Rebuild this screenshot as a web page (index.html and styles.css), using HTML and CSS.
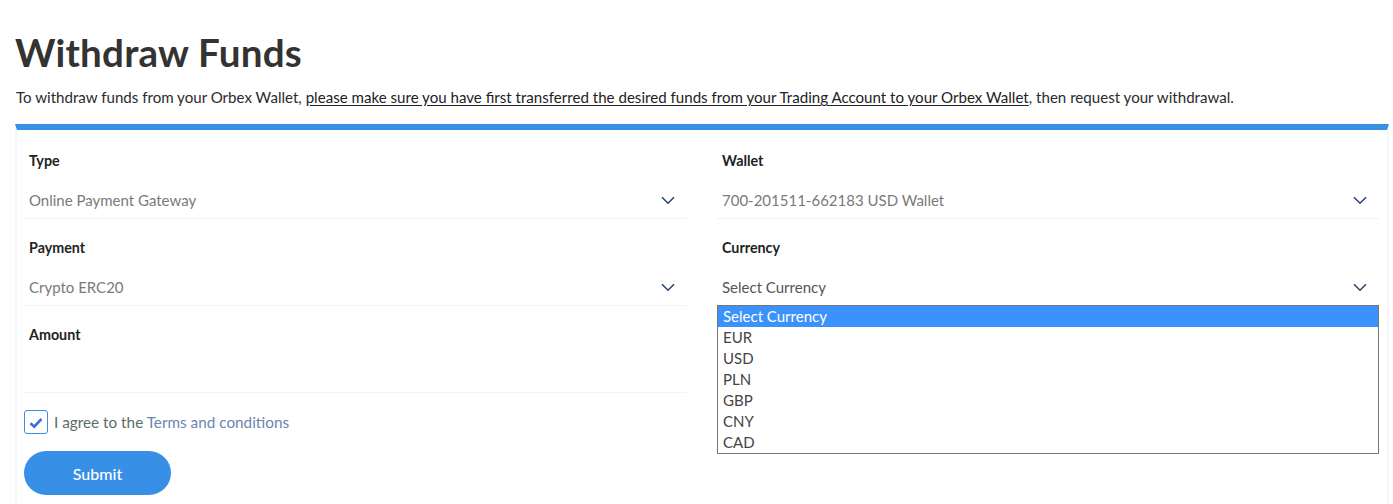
FILE: index.html
```html
<!DOCTYPE html>
<html lang="en">
<head>
<meta charset="utf-8">
<title>Withdraw Funds</title>
<link rel="stylesheet" href="styles.css">
</head>
<body>
<main class="page">
  <h1 class="title">Withdraw Funds</h1>
  <p class="intro">To withdraw funds from your Orbex Wallet, <a class="intro-link" href="#">please make sure you have first transferred the desired funds from your Trading Account to your Orbex Wallet</a>, then request your withdrawal.</p>

  <section class="card">
    <div class="grid">
      <div class="col">
        <div class="field">
          <div class="label">Type</div>
          <div class="select">
            <span class="value">Online Payment Gateway</span>
            <svg class="chev" width="14" height="9" viewBox="0 0 14 9"><path d="M1 1.2 L7 7.2 L13 1.2" fill="none" stroke="#2b4572" stroke-width="1.6"/></svg>
          </div>
        </div>
        <div class="field">
          <div class="label">Payment</div>
          <div class="select">
            <span class="value">Crypto ERC20</span>
            <svg class="chev" width="14" height="9" viewBox="0 0 14 9"><path d="M1 1.2 L7 7.2 L13 1.2" fill="none" stroke="#2b4572" stroke-width="1.6"/></svg>
          </div>
        </div>
        <div class="field">
          <div class="label">Amount</div>
          <div class="select"></div>
        </div>
        <label class="agree">
          <span class="checkbox">
            <svg width="14" height="12" viewBox="0 0 14 12"><path d="M1.5 6.2 L5.2 9.6 L12.5 2" fill="none" stroke="#3d6fd6" stroke-width="2.6"/></svg>
          </span>
          <span class="agree-text">I agree to the <a class="terms" href="#">Terms and conditions</a></span>
        </label>
        <button class="submit" type="button">Submit</button>
      </div>

      <div class="col">
        <div class="field">
          <div class="label">Wallet</div>
          <div class="select">
            <span class="value">700-201511-662183 USD Wallet</span>
            <svg class="chev" width="14" height="9" viewBox="0 0 14 9"><path d="M1 1.2 L7 7.2 L13 1.2" fill="none" stroke="#2b4572" stroke-width="1.6"/></svg>
          </div>
        </div>
        <div class="field dropdown-host">
          <div class="label">Currency</div>
          <div class="select">
            <span class="value dark">Select Currency</span>
            <svg class="chev" width="14" height="9" viewBox="0 0 14 9"><path d="M1 1.2 L7 7.2 L13 1.2" fill="none" stroke="#2b4572" stroke-width="1.6"/></svg>
          </div>
          <ul class="listbox">
            <li class="opt selected">Select Currency</li>
            <li class="opt">EUR</li>
            <li class="opt">USD</li>
            <li class="opt">PLN</li>
            <li class="opt">GBP</li>
            <li class="opt">CNY</li>
            <li class="opt">CAD</li>
          </ul>
        </div>
      </div>
    </div>
  </section>
</main>
</body>
</html>
```

FILE: styles.css
```css
* { box-sizing: border-box; }

html, body {
  margin: 0;
  padding: 0;
  background: #ffffff;
}

body {
  font-family: "Lato", "Liberation Sans", sans-serif;
  color: #333333;
  overflow: hidden;
}

.page {
  padding: 26px 4px 0 15px;
}

.title {
  margin: 0 0 0 0;
  font-size: 38.6px;
  line-height: 52px;
  font-weight: 700;
  color: #333333;
  letter-spacing: 0.2px;
}

.intro {
  margin: 8px 0 0 1px;
  font-size: 15.1px;
  line-height: 22px;
  color: #2b2b2b;
}

.intro-link {
  color: #222222;
  text-decoration: underline;
  text-underline-offset: 2px;
}

.card {
  margin-top: 16px;
  border-top: 6px solid #3790e6;
  border-left: 2px solid #f2f7fd;
  border-right: 2px solid #f2f7fd;
  padding: 0 8px 20px 7px;
  height: 400px;
}

.grid {
  display: grid;
  grid-template-columns: 663px 662px;
  column-gap: 30px;
}

.col {
  display: flex;
  flex-direction: column;
}

.field {
  margin-top: 21px;
  position: relative;
}

.field + .field {
  margin-top: 19px;
}

.label {
  padding-left: 5px;
  font-size: 14.3px;
  line-height: 20px;
  font-weight: 700;
  color: #222222;
  margin-bottom: 9px;
}

.select {
  height: 39px;
  border-bottom: 1px solid #edf4fc;
  display: flex;
  align-items: center;
  justify-content: space-between;
  padding: 1px 12px 0 5px;
}

.value {
  font-size: 15px;
  color: #7a7a7a;
}

.value.dark {
  color: #555555;
}

.chev {
  display: block;
  margin-top: 1px;
}

.agree {
  display: flex;
  align-items: center;
  margin-top: 17px;
  gap: 6px;
}

.checkbox {
  width: 24px;
  height: 24px;
  border: 1.5px solid #3b8ee6;
  border-radius: 3px;
  display: flex;
  align-items: center;
  justify-content: center;
  background: #fff;
}

.checkbox svg {
  display: block;
  margin-top: 1px;
}

.agree-text {
  font-size: 15.3px;
  color: #5b6e66;
}

.terms {
  color: #6a86ad;
  text-decoration: none;
}

.submit {
  margin-top: 17px;
  width: 147px;
  height: 44px;
  border: none;
  border-radius: 22px;
  background: #3790e6;
  color: #ffffff;
  font-family: inherit;
  font-size: 16px;
  font-weight: 500;
  cursor: pointer;
}

.listbox {
  position: absolute;
  left: 0;
  right: 0;
  top: 67px;
  margin: 0;
  padding: 0;
  list-style: none;
  border: 1px solid #767676;
  background: #ffffff;
  z-index: 2;
}

.opt {
  height: 21px;
  line-height: 21px;
  padding-left: 5px;
  font-size: 15px;
  color: #444444;
}

.opt.selected {
  background: #3b92fb;
  color: #ffffff;
}
```
